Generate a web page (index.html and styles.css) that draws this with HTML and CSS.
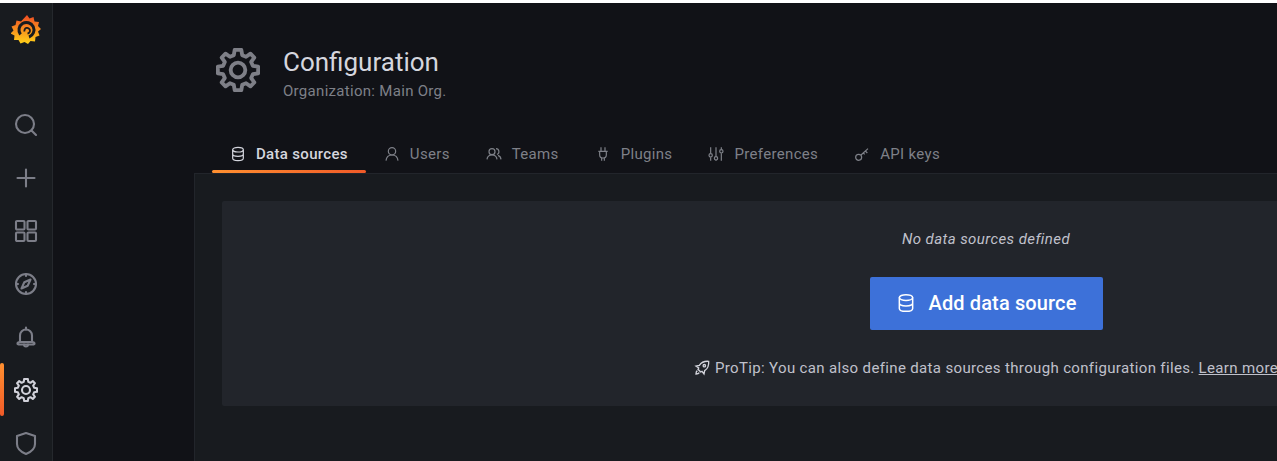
FILE: index.html
```html
<!DOCTYPE html>
<html lang="en">
<head>
  <meta charset="UTF-8" />
  <title>Configuration</title>
  <link rel="stylesheet" href="styles.css">
</head>
<body>
  <svg class="defs" width="0" height="0">
    <defs>
      <linearGradient id="logoGrad" x1="0" y1="1" x2="0" y2="0">
        <stop offset="0" stop-color="#ffd318"/>
        <stop offset="1" stop-color="#ef4b24"/>
      </linearGradient>
      <symbol id="gear" viewBox="0 0 24 24">
        <path d="M10.200 1h3.600l.5 2.900 2.100.9 2.400-1.700 2.100 2.100-1.700 2.400.9 2.100 2.900.5v3.600l-2.900.5-.9 2.100 1.700 2.400-2.100 2.100-2.400-1.700-2.100.9-.5 2.900h-3.600l-.5-2.900-2.100-.9-2.400 1.700-2.100-2.100 1.700-2.400-.9-2.100-2.900-.5v-3.600l2.900-.5.9-2.100-1.700-2.400 2.100-2.100 2.400 1.700 2.100-.9z"/>
        <circle cx="12" cy="12" r="4"/>
      </symbol>
      <symbol id="database" viewBox="0 0 24 24">
        <ellipse cx="12" cy="5.500" rx="8" ry="3.500"/>
        <path d="M4 5.500v13c0 2 3.600 3.500 8 3.500s8-1.500 8-3.500v-13M4 12c0 2 3.600 3.500 8 3.500s8-1.500 8-3.500"/>
      </symbol>
    </defs>
  </svg>
  <div class="app">
    <nav class="sidemenu">
      <svg class="logo" viewBox="0 0 30 30">
        <path fill="url(#logoGrad)" d="M16 0l2.500 3.500 4-1.500 1 4.500 4.500.5-1 4 3 3-3 2.500 1.500 4-4 1.500-.5 4.500-4.500-.5-2.500 3-3.500-2-4 1.500-2-3.500-4.500 0 .5-4.500-4-2 3-3-2-4 4-1.500 1-4.500 4.500 1z"/>
        <path d="M9.500 19.500a7.500 7.500 0 1 1 8.500 2.500" fill="none" stroke="#181b1f" stroke-width="3"/>
        <path d="M13.500 16.500a2.800 2.800 0 1 1 3 2" fill="none" stroke="#181b1f" stroke-width="1.800"/>
      </svg>
      <ul class="side-items">
        <li class="side-item">
          <svg class="side-icon" viewBox="0 0 24 24"><circle cx="11" cy="11" r="9"/><path d="M17.500 17.500L22 22"/></svg>
        </li>
        <li class="side-item">
          <svg class="side-icon" viewBox="0 0 24 24"><path d="M12 3.500v17M3.500 12h17"/></svg>
        </li>
        <li class="side-item">
          <svg class="side-icon" viewBox="0 0 24 24"><rect x="2" y="2" width="8.500" height="8.500" rx="1"/><rect x="13.500" y="2" width="8.500" height="8.500" rx="1"/><rect x="2" y="13.500" width="8.500" height="8.500" rx="1"/><rect x="13.500" y="13.500" width="8.500" height="8.500" rx="1"/></svg>
        </li>
        <li class="side-item">
          <svg class="side-icon" viewBox="0 0 24 24"><circle cx="12" cy="12" r="10"/><path d="M16.500 7.500l-2.800 6.200-6.200 2.800 2.800-6.200z"/><path d="M12 2v2M12 20v2M2 12h2M20 12h2"/></svg>
        </li>
        <li class="side-item">
          <svg class="side-icon" viewBox="0 0 24 24"><path d="M6 17v-6.500a6 6 0 0 1 12 0V17M3.500 18.500c0-1 1-1.500 2.500-1.500h12c1.500 0 2.500.5 2.500 1.500s-1 1-2 1H5.500c-1 0-2 0-2-1z"/><path d="M12 2.500v2M10 19.500a2 2 0 0 0 4 0"/></svg>
        </li>
        <li class="side-item side-item-active">
          <svg class="side-icon side-icon-light"><use href="#gear"/></svg>
        </li>
        <li class="side-item">
          <svg class="side-icon" viewBox="0 0 24 24"><path d="M12 2l9 3v8c0 5-4 8-9 10-5-2-9-5-9-10V5z"/></svg>
        </li>
      </ul>
    </nav>

    <main class="page">
      <header class="page-header">
        <svg class="header-icon"><use href="#gear"/></svg>
        <div class="header-text">
          <h1 class="page-title">Configuration</h1>
          <div class="page-sub">Organization: Main Org.</div>
        </div>
      </header>

      <ul class="tabs">
        <li class="tab tab-active">
          <svg class="tab-icon"><use href="#database"/></svg>
          Data sources
        </li>
        <li class="tab">
          <svg class="tab-icon" viewBox="0 0 24 24"><circle cx="12" cy="8" r="5.500"/><path d="M3 22c.5-5 4-8.500 9-8.500s8.500 3.500 9 8.500"/></svg>
          Users
        </li>
        <li class="tab">
          <svg class="tab-icon" viewBox="0 0 24 24"><circle cx="9" cy="8.500" r="4.500"/><path d="M1.500 20c.4-4 3.400-6.500 7.500-6.500s7.100 2.500 7.500 6.500M15 4a4.500 4.500 0 0 1 1.500 8.700M18 14c2.500.8 4.200 3 4.500 6"/></svg>
          Teams
        </li>
        <li class="tab">
          <svg class="tab-icon" viewBox="0 0 24 24"><path d="M9 2v6M15 2v6M5 8h14M7 8v5a5 5 0 0 0 10 0V8M10 18v4M14 18v4"/></svg>
          Plugins
        </li>
        <li class="tab">
          <svg class="tab-icon" viewBox="0 0 24 24"><path d="M4 2v9M4 17v5M12 2v14M12 21v1M20 2v3M20 11v11"/><circle cx="4" cy="14" r="2.500"/><circle cx="12" cy="18.500" r="2.500"/><circle cx="20" cy="8" r="2.500"/></svg>
          Preferences
        </li>
        <li class="tab">
          <svg class="tab-icon" viewBox="0 0 24 24"><circle cx="7" cy="17" r="4.500"/><path d="M10.500 13.500L21 4M17 7.500l3 3M14 10.500l2 2"/></svg>
          API keys
        </li>
      </ul>

      <section class="panel">
        <div class="empty-box">
          <div class="empty-title">No data sources defined</div>
          <button class="add-btn">
            <svg class="btn-icon"><use href="#database"/></svg>
            Add data source
          </button>
          <div class="protip">
            <svg class="tip-icon" viewBox="0 0 24 24"><path d="M22 2c-6-.5-11 1.500-14 6l-5 1 4 3-1 2 4 4 2-1 3 4 1-5c4.500-3 6.500-8 6-14z"/><circle cx="15.500" cy="8.500" r="1.800"/><path d="M5 16c-1.500 1-2 3-2 5 2 0 4-.5 5-2"/></svg>
            ProTip: You can also define data sources through configuration files. <a class="tip-link">Learn more</a>
          </div>
        </div>
      </section>
    </main>
  </div>
</body>
</html>
```

FILE: styles.css
```css
html, body {
  margin: 0;
  height: 100%;
  overflow: hidden;
  background: #111217;
}
body {
  font-family: Roboto, "Liberation Sans", sans-serif;
  color: #ccccdc;
  border-top: 3px solid #fff;
  box-sizing: border-box;
}
ul {
  list-style: none;
  margin: 0;
  padding: 0;
}
.defs {
  position: absolute;
}
.app {
  display: flex;
  height: 458px;
}
.sidemenu {
  flex: 0 0 52px;
  background: #181b1f;
  border-right: 1px solid #25282d;
  display: flex;
  flex-direction: column;
  align-items: center;
  overflow: hidden;
}
.logo {
  flex: none;
  width: 30px;
  height: 30px;
  margin-top: 12px;
}
.side-items {
  flex: none;
  width: 100%;
  margin-top: 53px;
}
.side-item {
  height: 53px;
  display: flex;
  align-items: center;
  justify-content: center;
  position: relative;
}
.side-item-active::before {
  content: "";
  position: absolute;
  left: 0;
  top: 0;
  width: 4px;
  height: 53px;
  border-radius: 2px;
  background: linear-gradient(#ff9030, #f05a28);
}
.side-icon {
  width: 24px;
  height: 24px;
  fill: none;
  stroke: #7c7e88;
  stroke-width: 2.100;
  stroke-linejoin: round;
  stroke-linecap: round;
}
.side-icon-light {
  stroke: #d0d1d9;
}
.page {
  flex: none;
  width: 1584px;
  padding-left: 141px;
  display: flex;
  flex-direction: column;
}
.page-header {
  display: flex;
  align-items: flex-start;
  padding: 41px 0 0 22px;
}
.header-icon {
  width: 44px;
  height: 44px;
  margin-top: 4px;
  fill: none;
  stroke: #7e7f87;
  stroke-width: 2.100;
  stroke-linejoin: round;
}
.header-text {
  margin-left: 23px;
}
.page-title {
  margin: 0;
  font-size: 26px;
  line-height: 36px;
  font-weight: 400;
  color: #d5d6de;
}
.page-sub {
  font-size: 15px;
  line-height: 22px;
  color: #7e8088;
  letter-spacing: .3px;
}
.tabs {
  display: flex;
  margin-top: 33px;
  padding-left: 18px;
}
.tab {
  display: flex;
  align-items: center;
  gap: 10px;
  height: 38px;
  padding: 0 18px;
  font-size: 15px;
  font-weight: 400;
  letter-spacing: .33px;
  color: #7e8088;
  position: relative;
}
.tab-active {
  font-weight: 500;
  letter-spacing: .32px;
  color: #d5d6de;
}
.tab-active::after {
  content: "";
  position: absolute;
  left: 0;
  right: 0;
  bottom: 0;
  height: 3px;
  border-radius: 2px;
  background: linear-gradient(90deg, #ff9030, #f05a28);
}
.tab-icon {
  width: 16px;
  height: 16px;
  fill: none;
  stroke: currentColor;
  stroke-width: 1.800;
}
.panel {
  flex: 1;
  background: #181b1f;
  border: 1px solid #22252b;
  border-bottom: 0;
  padding: 27px 27px 0;
}
.empty-box {
  background: #22252b;
  border-radius: 2px;
  height: 205px;
  display: flex;
  flex-direction: column;
  align-items: center;
  box-sizing: border-box;
  padding-top: 29px;
}
.empty-title {
  font-size: 15px;
  line-height: 18px;
  font-style: italic;
  letter-spacing: .42px;
  color: #c0c1cb;
}
.add-btn {
  margin-top: 29px;
  width: 233px;
  height: 53px;
  border: 0;
  border-radius: 2px;
  padding: 0 0 2px;
  background: #3d71d9;
  color: #fff;
  font-family: inherit;
  font-size: 20px;
  font-weight: 500;
  letter-spacing: .13px;
  display: flex;
  align-items: center;
  justify-content: center;
  gap: 13px;
}
.btn-icon {
  width: 20px;
  height: 20px;
  fill: none;
  stroke: #fff;
  stroke-width: 1.800;
}
.protip {
  margin-top: 28px;
  font-size: 15px;
  line-height: 20px;
  letter-spacing: .35px;
  color: #c0c1cb;
  white-space: nowrap;
  display: flex;
  align-items: center;
}
.tip-icon {
  width: 16px;
  height: 16px;
  fill: none;
  stroke: #d5d6de;
  stroke-width: 2;
  margin-right: 5px;
}
.tip-link {
  text-decoration: underline;
  margin-left: 4px;
}
```
